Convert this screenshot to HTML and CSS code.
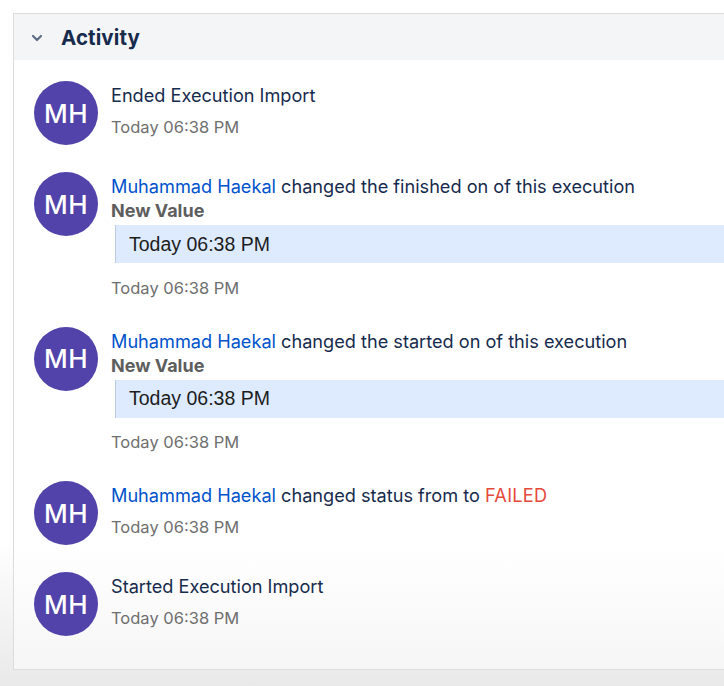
FILE: index.html
```html
<!DOCTYPE html>
<html lang="en">
<head>
<meta charset="utf-8">
<title>Activity</title>
<link rel="stylesheet" href="styles.css">
</head>
<body>
<section class="panel">
  <header class="panel-header">
    <svg class="chevron" width="12" height="8" viewBox="0 0 12 8" aria-hidden="true"><path d="M2 2l4 4 4-4" fill="none" stroke="#5e6c84" stroke-width="2.2" stroke-linecap="round" stroke-linejoin="round"/></svg>
    <h2 class="panel-title">Activity</h2>
  </header>
  <ul class="feed">
    <li class="item">
      <div class="avatar">MH</div>
      <div class="body">
        <div class="line">Ended Execution Import</div>
        <div class="time">Today 06:38 PM</div>
      </div>
    </li>
    <li class="item">
      <div class="avatar">MH</div>
      <div class="body">
        <div class="line"><span class="user">Muhammad Haekal</span> changed the finished on of this execution</div>
        <div class="label">New Value</div>
        <div class="value">Today 06:38 PM</div>
        <div class="time time-after">Today 06:38 PM</div>
      </div>
    </li>
    <li class="item">
      <div class="avatar">MH</div>
      <div class="body">
        <div class="line"><span class="user">Muhammad Haekal</span> changed the started on of this execution</div>
        <div class="label">New Value</div>
        <div class="value">Today 06:38 PM</div>
        <div class="time time-after">Today 06:38 PM</div>
      </div>
    </li>
    <li class="item">
      <div class="avatar">MH</div>
      <div class="body">
        <div class="line"><span class="user">Muhammad Haekal</span> changed status from to <span class="failed">FAILED</span></div>
        <div class="time">Today 06:38 PM</div>
      </div>
    </li>
    <li class="item">
      <div class="avatar">MH</div>
      <div class="body">
        <div class="line">Started Execution Import</div>
        <div class="time">Today 06:38 PM</div>
      </div>
    </li>
  </ul>
</section>
</body>
</html>
```
FILE: styles.css
```css
html, body {
  margin: 0;
  padding: 0;
}
body {
  width: 724px;
  height: 686px;
  overflow: hidden;
  font-family: Inter, "Noto Sans", sans-serif;
  background: linear-gradient(to bottom, #ffffff 0, #ffffff 540px, #e9e9e9 686px);
}
.panel {
  margin: 13px 0 0 13px;
  border: 1px solid #dcdcdc;
  border-right: none;
  background: linear-gradient(to bottom, #ffffff 0, #ffffff 530px, #f6f6f6 656px);
  padding-bottom: 33px;
}
.panel-header {
  display: flex;
  align-items: center;
  height: 46px;
  background: #f4f5f7;
  padding-left: 17px;
  gap: 18px;
}
.chevron {
  display: block;
  margin-top: 2px;
}
.panel-title {
  margin: 0;
  font-size: 20.5px;
  font-weight: 700;
  color: #172b4d;
  letter-spacing: 0.1px;
}
.feed {
  list-style: none;
  margin: 0;
  padding: 21px 0 0 20px;
  display: flex;
  flex-direction: column;
  gap: 27px;
}
.item {
  display: flex;
  gap: 13px;
  align-items: flex-start;
}
.avatar {
  flex: none;
  width: 64px;
  height: 64px;
  border-radius: 50%;
  background: #5243aa;
  color: #ffffff;
  font-family: Inter, sans-serif;
  font-size: 26px;
  font-weight: 500;
  display: flex;
  align-items: center;
  justify-content: center;
  letter-spacing: 0.5px;
}
.body {
  flex: 1;
  padding-top: 2px;
  min-width: 0;
}
.line {
  font-size: 18.15px;
  line-height: 24px;
  color: #172b4d;
  white-space: nowrap;
}
.user {
  color: #0052cc;
}
.failed {
  color: #e5493a;
  letter-spacing: 0.3px;
}
.label {
  font-size: 18px;
  line-height: 26px;
  font-weight: 700;
  color: #5e5e5e;
}
.value {
  margin: 1px 0 0 4px;
  height: 38px;
  display: flex;
  align-items: center;
  padding-left: 13px;
  background: #deebff;
  border-left: 1px solid #b9c9e0;
  font-family: "Liberation Sans", Arial, sans-serif;
  font-size: 19.5px;
  color: #1d1d1d;
}
.time {
  margin-top: 8px;
  font-size: 16.5px;
  line-height: 24px;
  color: #6f6f6f;
}
.time-after {
  margin-top: 12.5px;
}
```
